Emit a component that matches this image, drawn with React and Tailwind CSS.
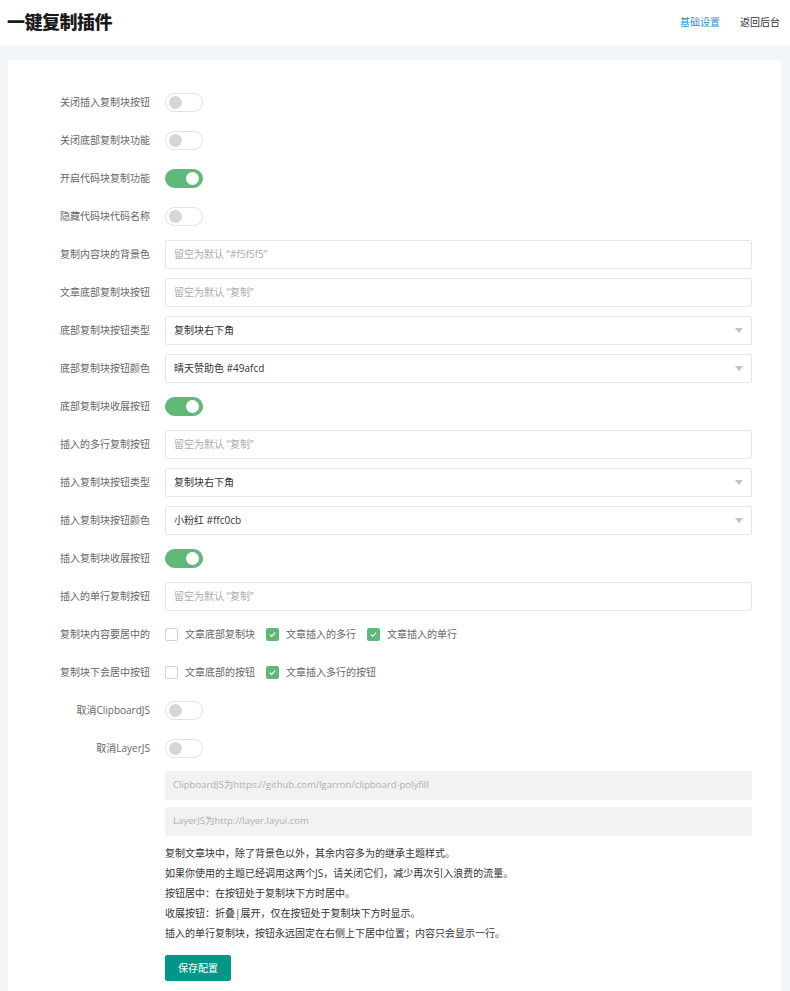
import { useState } from "react";

const FONT = { fontFamily: '"Open Sans", "Noto Sans CJK SC", sans-serif' };

function Toggle({ on }) {
    return (
        <div
            className={
                on
                    ? "relative w-[38px] h-[19px] rounded-full border border-[#5fb878] bg-[#5fb878]"
                    : "relative w-[38px] h-[19px] rounded-full border border-[#e2e2e2] bg-white"
            }
        >
            <span
                className={
                    on
                        ? "absolute top-[2px] right-[3px] w-[13px] h-[13px] rounded-full bg-white"
                        : "absolute top-[2px] left-[3px] w-[13px] h-[13px] rounded-full bg-[#d6d6d6]"
                }
            />
        </div>
    );
}

function Check({ on, label }) {
    return (
        <div className="flex items-center mr-[11px]">
            {on ? (
                <span className="w-[13px] h-[13px] rounded-[2px] bg-[#5fb878] flex items-center justify-center">
                    <svg width="9" height="9" viewBox="0 0 10 10" fill="none">
                        <path d="M2 5.2l2 2 4-4.4" stroke="#fff" strokeWidth="1.3" />
                    </svg>
                </span>
            ) : (
                <span className="w-[13px] h-[13px] rounded-[2px] border border-[#d2d2d2] bg-white" />
            )}
            <span className="ml-[7px] text-[10px] text-[#666]">{label}</span>
        </div>
    );
}

function TextInput({ placeholder }) {
    return (
        <input
            className="w-full h-[29px] border border-[#e6e6e6] rounded-[2px] px-[8px] text-[10px] text-[#333] placeholder-[#aaa] outline-none"
            placeholder={placeholder}
        />
    );
}

function Select({ value }) {
    return (
        <div className="w-full h-[29px] border border-[#e6e6e6] rounded-[2px] pl-[8px] pr-[8px] flex items-center justify-between">
            <span className="text-[10px] text-[#333]">{value}</span>
            <span className="w-0 h-0 border-l-[4px] border-r-[4px] border-t-[5px] border-l-transparent border-r-transparent border-t-[#c2c2c2]" />
        </div>
    );
}

function Row({ label, children }) {
    return (
        <div className="flex items-center h-[38px]">
            <div className="w-[142px] text-right text-[10px] text-[#666] shrink-0">{label}</div>
            <div className="flex-1 ml-[15px] mr-[29px] flex items-center">{children}</div>
        </div>
    );
}

const rows = [
    { label: "关闭插入复制块按钮", type: "toggle", on: false },
    { label: "关闭底部复制块功能", type: "toggle", on: false },
    { label: "开启代码块复制功能", type: "toggle", on: true },
    { label: "隐藏代码块代码名称", type: "toggle", on: false },
    { label: "复制内容块的背景色", type: "input", placeholder: "留空为默认 “#f5f5f5”" },
    { label: "文章底部复制块按钮", type: "input", placeholder: "留空为默认 “复制”" },
    { label: "底部复制块按钮类型", type: "select", value: "复制块右下角" },
    { label: "底部复制块按钮颜色", type: "select", value: "晴天赞助色 #49afcd" },
    { label: "底部复制块收展按钮", type: "toggle", on: true },
    { label: "插入的多行复制按钮", type: "input", placeholder: "留空为默认 “复制”" },
    { label: "插入复制块按钮类型", type: "select", value: "复制块右下角" },
    { label: "插入复制块按钮颜色", type: "select", value: "小粉红 #ffc0cb" },
    { label: "插入复制块收展按钮", type: "toggle", on: true },
    { label: "插入的单行复制按钮", type: "input", placeholder: "留空为默认 “复制”" },
];

const notes = [
    "复制文章块中，除了背景色以外，其余内容多为的继承主题样式。",
    "如果你使用的主题已经调用这两个JS，请关闭它们，减少再次引入浪费的流量。",
    "按钮居中：在按钮处于复制块下方时居中。",
    "收展按钮：折叠|展开，仅在按钮处于复制块下方时显示。",
    "插入的单行复制块，按钮永远固定在右侧上下居中位置；内容只会显示一行。",
];

export default function App() {
    const [saved, setSaved] = useState(false);

    return (
        <div className="min-h-[991px] bg-[#f3f6f9]" style={FONT}>
            <header className="h-[45px] bg-white flex items-center justify-between pl-[7px] pr-[10px]">
                <h1 className="text-[18px] font-extrabold text-[#1a1a1a] tracking-[-0.5px]">一键复制插件</h1>
                <nav className="flex gap-[20px] text-[10px]">
                    <a className="text-[#2f8fd0]">基础设置</a>
                    <a className="text-[#333]">返回后台</a>
                </nav>
            </header>

            <div className="pl-[8px] pr-[9px] pt-[15px]">
                <div className="bg-white rounded-[3px] pt-[23px] pb-[20px]">
                    {rows.map((r) => (
                        <Row key={r.label} label={r.label}>
                            {r.type === "toggle" && <Toggle on={r.on} />}
                            {r.type === "input" && <TextInput placeholder={r.placeholder} />}
                            {r.type === "select" && <Select value={r.value} />}
                        </Row>
                    ))}
                    <Row label="复制块内容要居中的">
                        <Check on={false} label="文章底部复制块" />
                        <Check on={true} label="文章插入的多行" />
                        <Check on={true} label="文章插入的单行" />
                    </Row>
                    <Row label="复制块下会居中按钮">
                        <Check on={false} label="文章底部的按钮" />
                        <Check on={true} label="文章插入多行的按钮" />
                    </Row>
                    <Row label="取消ClipboardJS">
                        <Toggle on={false} />
                    </Row>
                    <Row label="取消LayerJS">
                        <Toggle on={false} />
                    </Row>

                    <div className="ml-[157px] mr-[29px] mt-[4px]">
                        <div className="h-[29px] bg-[#f2f2f2] rounded-[2px] px-[8px] flex items-center text-[9.5px] text-[#b0b0b0]">
                            ClipboardJS为https://github.com/lgarron/clipboard-polyfill
                        </div>
                        <div className="h-[29px] bg-[#f2f2f2] rounded-[2px] px-[8px] mt-[7px] flex items-center text-[9.5px] text-[#b0b0b0]">
                            LayerJS为http://layer.layui.com
                        </div>
                        <div className="mt-[7px]">
                            {notes.map((n) => (
                                <p key={n} className="h-[20px] leading-[20px] text-[10px] text-[#333]">
                                    {n}
                                </p>
                            ))}
                        </div>
                        <button
                            onClick={() => setSaved(true)}
                            className="mt-[12px] w-[66px] h-[26px] bg-[#009688] rounded-[2px] text-white text-[10px]"
                        >
                            {saved ? "已保存" : "保存配置"}
                        </button>
                    </div>
                </div>
            </div>
        </div>
    );
}
